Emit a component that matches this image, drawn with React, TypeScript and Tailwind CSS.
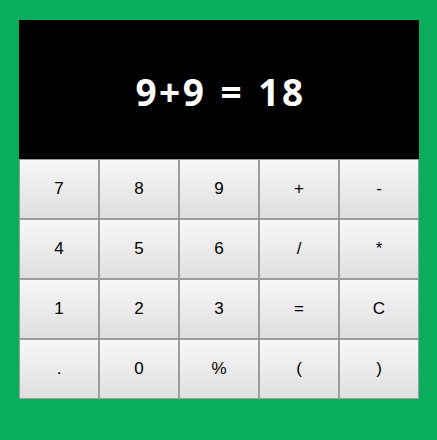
const keys: string[] = ['7', '8', '9', '+', '-', '4', '5', '6', '/', '*', '1', '2', '3', '=', 'C', '.', '0', '%', '(', ')'];

export default function App() {
    return (
        <div className="min-h-screen w-full bg-[#09ad5b] pt-[20px] pl-[19px]">
            <div className="w-[400px]">
                {/* Display */}
                <div className="h-[139px] bg-black flex items-center justify-center">
                    <span
                        className="text-white font-bold text-[37px] pt-[4px] pl-[3px] tracking-[2.5px] [word-spacing:2px]"
                        style={{ fontFamily: '"Open Sans", sans-serif' }}
                    >
                        9+9 = 18
                    </span>
                </div>

                {/* Keypad */}
                <div className="grid grid-cols-5">
                    {keys.map((k) => (
                        <button
                            key={k}
                            className="h-[60px] border border-[#9c9c9c] bg-gradient-to-b from-[#f7f7f7] to-[#dfdfdf] text-black text-[17px] flex items-center justify-center"
                            style={{ fontFamily: '"Liberation Sans", Arial, sans-serif' }}
                        >
                            {k}
                        </button>
                    ))}
                </div>
            </div>
        </div>
    );
}
